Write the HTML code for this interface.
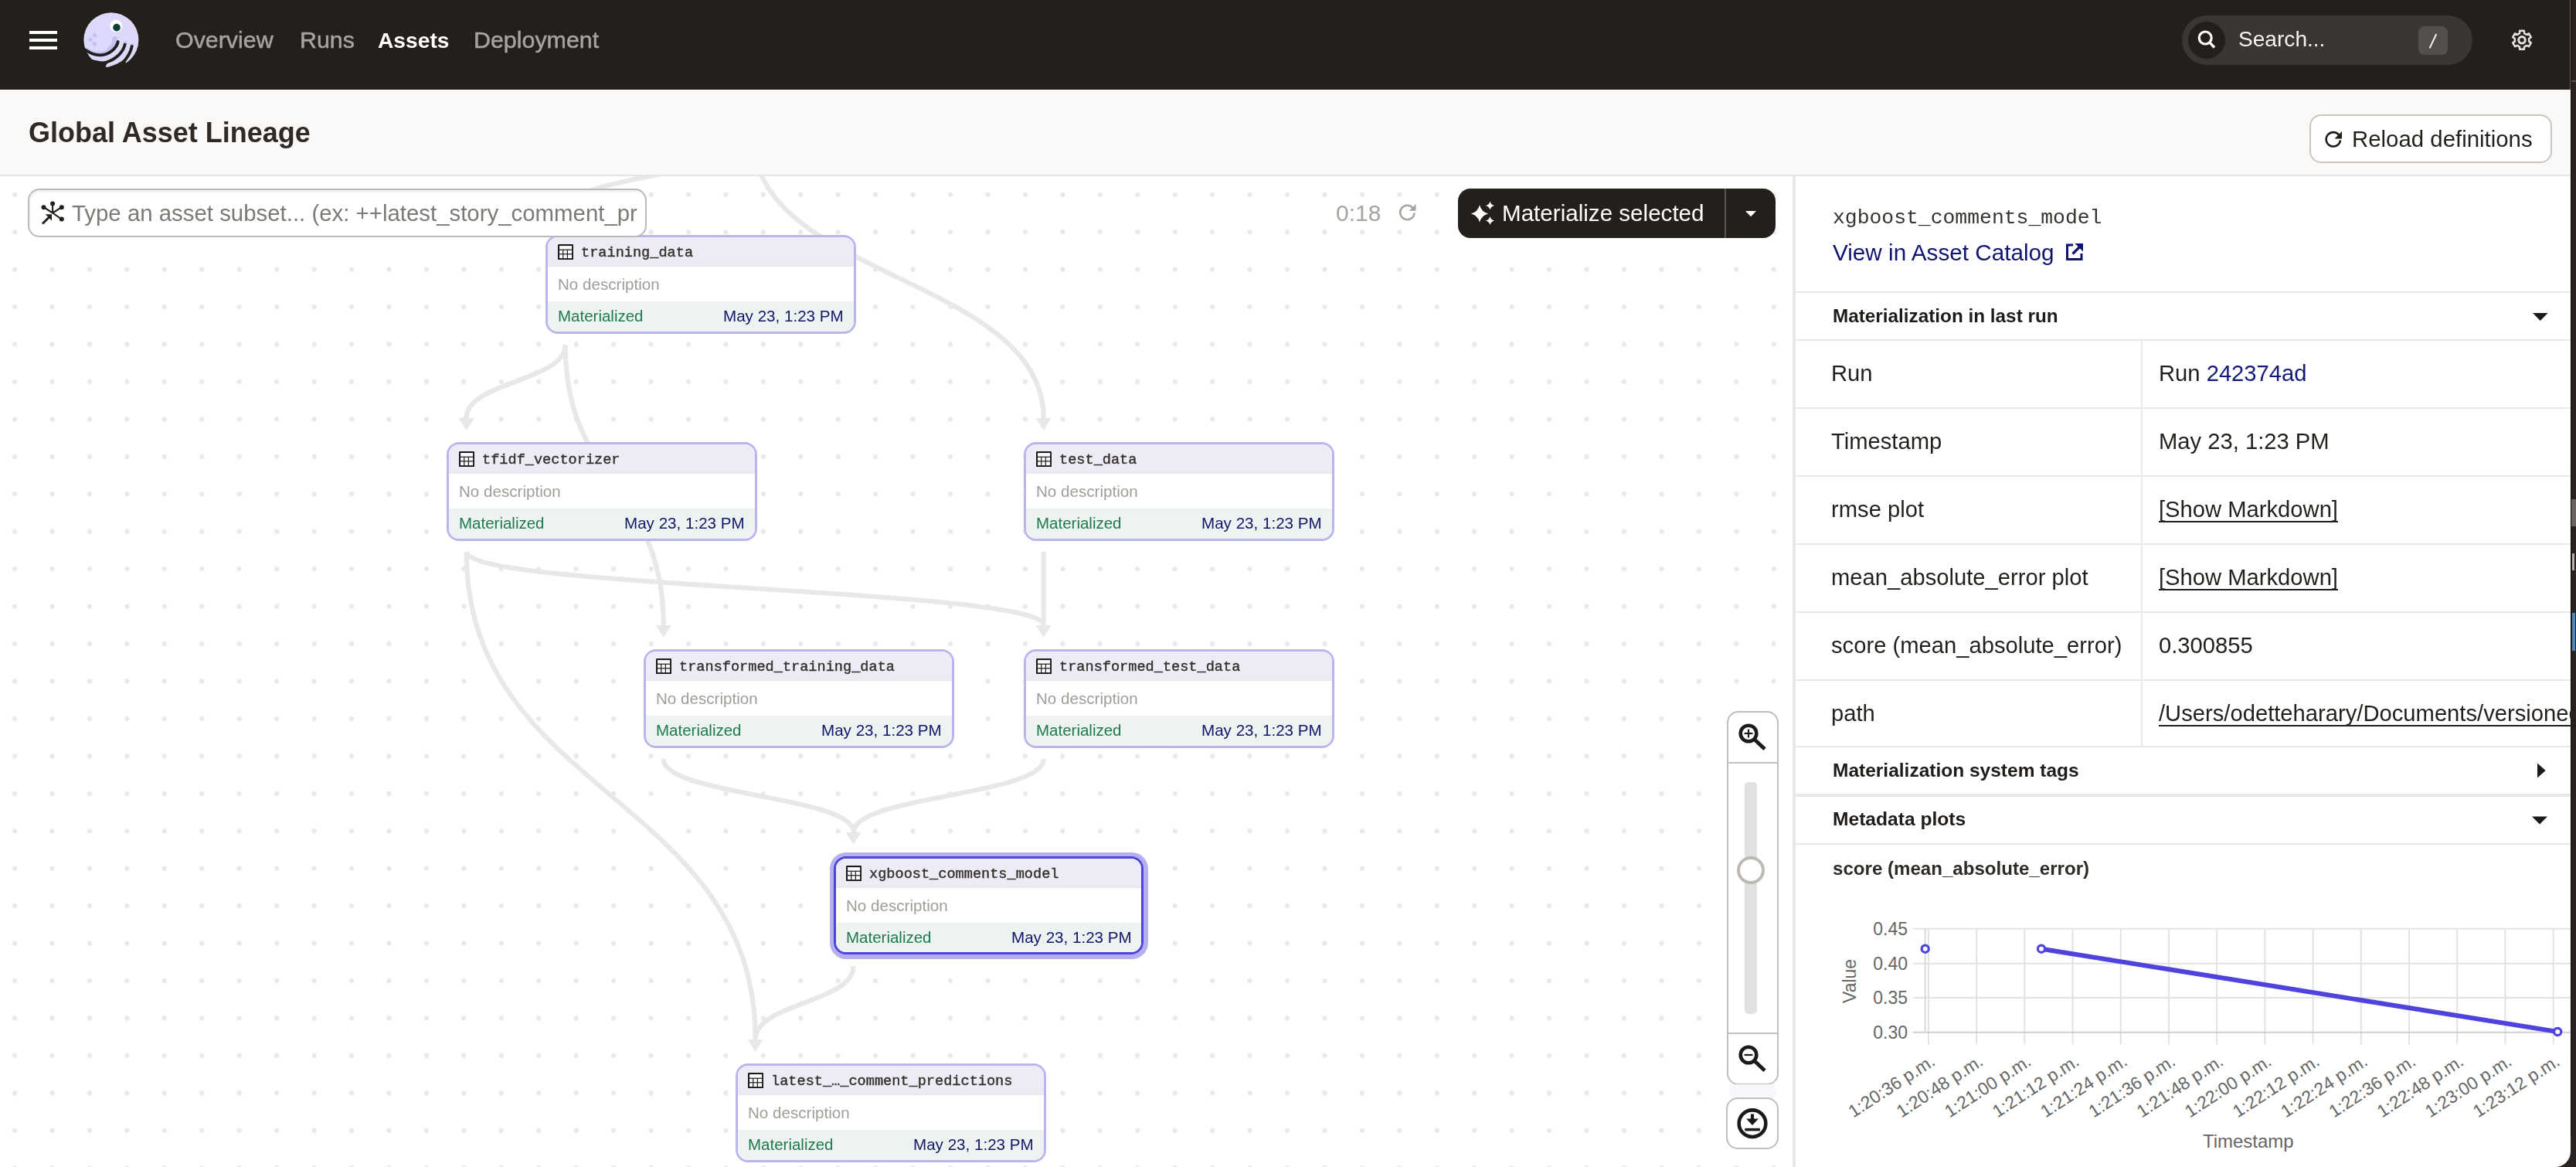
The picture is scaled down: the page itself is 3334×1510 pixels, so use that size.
<!DOCTYPE html><html><head><meta charset="utf-8"><style>
html,body{margin:0;padding:0;}
body{width:3334px;height:1510px;position:relative;overflow:hidden;background:#fff;font-family:'Liberation Sans', sans-serif;}
.t{position:absolute;white-space:nowrap;will-change:transform;}
.a{position:absolute;}
</style></head><body>
<div class="a" style="left:0;top:0;width:3327px;height:116px;background:#231f1b;"></div>
<div class="a" style="left:38px;top:40px;width:36px;height:4px;background:#fff;"></div>
<div class="a" style="left:38px;top:50px;width:36px;height:4px;background:#fff;"></div>
<div class="a" style="left:38px;top:60px;width:36px;height:4px;background:#fff;"></div>
<svg class="a" style="left:100px;top:10px" width="90" height="85" viewBox="0 0 90 85">
<circle cx="43.9" cy="41.7" r="35.5" fill="#dcd9fb"/>
<path d="M49.5,41.5 C49,50 42,57.5 30,58.5 C22,59 17,57 13.5,54" stroke="#c6c1f4" stroke-width="3.2" fill="none" stroke-linecap="round"/>
<path d="M49,40.5 C48.5,47 46,51 42,54" stroke="#c6c1f4" stroke-width="7" fill="none" stroke-linecap="round"/>
<path d="M52.7,44 C51,52 42,61 30,61.3 C22,61.3 17,59 8,53" stroke="#231f1b" stroke-width="3.8" fill="none" stroke-linecap="round"/>
<path d="M61.8,46.9 C60,56 52,66 38,70.5 C33,72 28,72.5 20,73.5" stroke="#231f1b" stroke-width="3.8" fill="none" stroke-linecap="round"/>
<path d="M70.8,49.4 C69.5,57 66,64 58,72 L54,76" stroke="#231f1b" stroke-width="3.8" fill="none" stroke-linecap="round"/>
<path d="M8,56 L13,62" stroke="#231f1b" stroke-width="4" fill="none"/>
<path d="M13,64.5 C18,67 26,69 33,69.5 L40,69 L34,82 L4,82 L4,64 Z" fill="#231f1b"/>
<path d="M36,77.3 C42,76.5 50,74 56,70 L60,67.5 L63,69 L60,86 L30,86 Z" fill="#231f1b"/>
<circle cx="22.5" cy="35.6" r="2.7" fill="#c6c1f4"/>
<circle cx="16.9" cy="41.2" r="2.7" fill="#c6c1f4"/>
<circle cx="22.3" cy="46.8" r="2.7" fill="#c6c1f4"/>
<circle cx="62.5" cy="44.5" r="1.8" fill="#c6c1f4"/>
<circle cx="71.5" cy="47" r="1.6" fill="#c6c1f4"/>
<circle cx="50.3" cy="23.6" r="8" fill="#fff"/>
<circle cx="51" cy="25.6" r="4.8" fill="#0f3d37"/>
</svg>
<div class="t" style="left:227.00px;top:36.27px;font-size:30.4px;line-height:30.4px;color:#a7a39e;font-weight:400;font-family:'Liberation Sans', sans-serif;-webkit-text-stroke:0.5px #a7a39e;">Overview</div>
<div class="t" style="left:387.50px;top:36.27px;font-size:30.4px;line-height:30.4px;color:#a7a39e;font-weight:400;font-family:'Liberation Sans', sans-serif;-webkit-text-stroke:0.5px #a7a39e;">Runs</div>
<div class="t" style="left:489.00px;top:38.13px;font-size:28.2px;line-height:28.2px;color:#ffffff;font-weight:700;font-family:'Liberation Sans', sans-serif;">Assets</div>
<div class="t" style="left:612.50px;top:36.27px;font-size:30.4px;line-height:30.4px;color:#a7a39e;font-weight:400;font-family:'Liberation Sans', sans-serif;-webkit-text-stroke:0.5px #a7a39e;">Deployment</div>
<div class="a" style="left:2824px;top:20px;width:376px;height:64px;border-radius:32px;background:#3a3632;"></div>
<div class="a" style="left:2832px;top:28px;width:48px;height:48px;border-radius:24px;background:#231f1b;"></div>
<svg class="a" style="left:2840px;top:36px" width="32" height="32" viewBox="0 0 32 32">
<circle cx="14.2" cy="13" r="8" stroke="#fff" stroke-width="3.2" fill="none"/>
<line x1="19.8" y1="18.8" x2="26" y2="25.5" stroke="#fff" stroke-width="3.4"/>
</svg>
<div class="t" style="left:2897.00px;top:37.11px;font-size:28.1px;line-height:28.1px;color:#f5f4f2;font-weight:400;font-family:'Liberation Sans', sans-serif;">Search...</div>
<div class="a" style="left:3130px;top:34px;width:38px;height:37px;border-radius:8px;background:#53504c;"></div>
<svg class="a" style="left:3130px;top:34px" width="38" height="37"><line x1="14.6" y1="28.4" x2="23.2" y2="10" stroke="#f2f2f2" stroke-width="2"/></svg>
<svg class="a" style="left:3244px;top:32px" width="40" height="40" viewBox="0 0 40 40">
<path d="M23.03,11.01 L22.77,7.82 L17.23,7.82 L16.97,11.01 L13.90,12.78 L11.00,11.41 L8.24,16.20 L10.87,18.03 L10.87,21.57 L8.24,23.40 L11.00,28.19 L13.90,26.82 L16.97,28.59 L17.23,31.78 L22.77,31.78 L23.03,28.59 L26.10,26.82 L29.00,28.19 L31.76,23.40 L29.13,21.57 L29.13,18.03 L31.76,16.20 L29.00,11.41 L26.10,12.78 Z" stroke="#e2e1df" stroke-width="2.6" fill="none" stroke-linejoin="round"/>
<circle cx="20" cy="19.8" r="4.3" stroke="#e2e1df" stroke-width="3" fill="none"/>
</svg>
<div class="a" style="left:3326px;top:0;width:1px;height:116px;background:#6e6a66;"></div>
<div class="a" style="left:3327px;top:0;width:1px;height:1510px;background:#0a0a0a;"></div>
<div class="a" style="left:3328px;top:0;width:6px;height:1510px;background:#2b2120;"></div>
<div class="a" style="left:3328px;top:104px;width:6px;height:2px;background:#5a5050;"></div>
<div class="a" style="left:3328px;top:646px;width:6px;height:35px;background:#6b6360;"></div>
<div class="a" style="left:3329px;top:716px;width:3px;height:22px;background:#b5b0ab;"></div>
<div class="a" style="left:3329px;top:793px;width:4px;height:49px;background:#4a8ac0;"></div>
<div class="a" style="left:0;top:116px;width:3327px;height:110px;background:#faf9f7;"></div>
<div class="a" style="left:0;top:226px;width:3327px;height:2px;background:#e5e5e6;"></div>
<div class="t" style="left:36.50px;top:154.33px;font-size:36.0px;line-height:36.0px;color:#2e2a26;font-weight:700;font-family:'Liberation Sans', sans-serif;">Global Asset Lineage</div>
<div class="a" style="left:2988.5px;top:148.2px;width:310.5px;height:59px;border:2px solid #c9c5c0;border-radius:15px;background:#fff;"></div>
<svg class="a" style="left:3004px;top:165px" width="32" height="32" viewBox="0 0 32 32">
<path d="M23.4,10 A9.2,9.2 0 1 0 25,16.5" stroke="#1e1b18" stroke-width="2.6" fill="none"/>
<path d="M27,5 L27,14.5 L17.5,14.5 Z" fill="#231f1b"/>
</svg>
<div class="t" style="left:3044.00px;top:165.41px;font-size:29.4px;line-height:29.4px;color:#231f1b;font-weight:400;font-family:'Liberation Sans', sans-serif;">Reload definitions</div>
<svg class="a" style="left:0;top:228px" width="2320" height="1282" viewBox="0 228 2320 1282">
<defs><pattern id="dots" patternUnits="userSpaceOnUse" x="-5.170" y="227.580" width="48.44" height="48.44"><circle cx="24.22" cy="24.22" r="3.1" fill="#e9e9e9"/></pattern></defs>
<rect x="0" y="228" width="2320" height="1282" fill="url(#dots)"/>
<path d="M975.00,178.00 C975.00,225.50 731.70,225.50 731.70,273.00" stroke="#e8e8e8" stroke-width="6.2" fill="none"/>
<path d="M975.00,178.00 C975.00,359.50 1350.70,359.50 1350.70,541.00" stroke="#e8e8e8" stroke-width="6.2" fill="none"/>
<path d="M731.70,446.00 C731.70,493.50 603.70,493.50 603.70,541.00" stroke="#e8e8e8" stroke-width="6.2" fill="none"/>
<path d="M731.70,446.00 C731.70,627.50 858.70,627.50 858.70,809.00" stroke="#e8e8e8" stroke-width="6.2" fill="none"/>
<path d="M603.70,714.00 C603.70,761.50 1350.70,761.50 1350.70,809.00" stroke="#e8e8e8" stroke-width="6.2" fill="none"/>
<path d="M603.70,714.00 C603.70,1029.50 977.70,1029.50 977.70,1345.00" stroke="#e8e8e8" stroke-width="6.2" fill="none"/>
<path d="M1350.70,714.00 C1350.70,761.50 1350.70,761.50 1350.70,809.00" stroke="#e8e8e8" stroke-width="6.2" fill="none"/>
<path d="M858.70,982.00 C858.70,1029.50 1104.70,1029.50 1104.70,1077.00" stroke="#e8e8e8" stroke-width="6.2" fill="none"/>
<path d="M1350.70,982.00 C1350.70,1029.50 1104.70,1029.50 1104.70,1077.00" stroke="#e8e8e8" stroke-width="6.2" fill="none"/>
<path d="M1104.70,1250.00 C1104.70,1297.50 977.70,1297.50 977.70,1345.00" stroke="#e8e8e8" stroke-width="6.2" fill="none"/>
<path d="M721.70,273.00 L741.70,273.00 L731.70,289.00 Z" fill="#e8e8e8"/>
<path d="M848.70,809.00 L868.70,809.00 L858.70,825.00 Z" fill="#e8e8e8"/>
<path d="M1340.70,809.00 L1360.70,809.00 L1350.70,825.00 Z" fill="#e8e8e8"/>
<path d="M967.70,1345.00 L987.70,1345.00 L977.70,1361.00 Z" fill="#e8e8e8"/>
<path d="M1094.70,1077.00 L1114.70,1077.00 L1104.70,1093.00 Z" fill="#e8e8e8"/>
<path d="M593.70,541.00 L613.70,541.00 L603.70,557.00 Z" fill="#e8e8e8"/>
<path d="M1340.70,541.00 L1360.70,541.00 L1350.70,557.00 Z" fill="#e8e8e8"/>
</svg>
<div class="a" style="left:706px;top:304px;width:396px;height:122px;border:3px solid #bbb5ee;border-radius:16px;background:#fff;overflow:hidden;"><div class="a" style="left:0;top:0;right:0;height:36px;background:#ecebf6;"></div><div class="a" style="left:0;top:36px;right:0;height:2px;background:#e9e8ef;"></div><div class="a" style="left:0;top:83px;right:0;bottom:0;background:#edf3f0;"></div></div>
<svg class="a" style="left:722px;top:316.3px" width="20.2" height="20.2" viewBox="0 0 20.4 20.4">
<rect x="0" y="0" width="20.4" height="20.4" rx="1.3" fill="#1b1a19"/>
<rect x="2.1" y="2.1" width="16.2" height="4.6" fill="#fbfbfe"/>
<rect x="2.1" y="7.9" width="4.1" height="4.4" fill="#fbfbfe"/><rect x="7.4" y="7.9" width="4.5" height="4.4" fill="#fbfbfe"/><rect x="13.1" y="7.9" width="5.2" height="4.4" fill="#fbfbfe"/>
<rect x="2.1" y="13.5" width="4.1" height="4.8" fill="#fbfbfe"/><rect x="7.4" y="13.5" width="4.5" height="4.8" fill="#fbfbfe"/><rect x="13.1" y="13.5" width="5.2" height="4.8" fill="#fbfbfe"/>
</svg>
<div class="t" style="left:751.50px;top:319.15px;font-size:18.6px;line-height:18.6px;color:#35302b;font-weight:400;font-family:'Liberation Mono', monospace;-webkit-text-stroke:0.4px #35302b;">training_data</div>
<div class="t" style="left:722.00px;top:357.56px;font-size:20.6px;line-height:20.6px;color:#a19d98;font-weight:400;font-family:'Liberation Sans', sans-serif;">No description</div>
<div class="t" style="left:722.00px;top:399.15px;font-size:20.5px;line-height:20.5px;color:#1d7a4c;font-weight:400;font-family:'Liberation Sans', sans-serif;">Materialized</div>
<div class="t" style="right:2242.50px;top:399.06px;font-size:20.6px;line-height:20.6px;color:#12166b;font-weight:400;font-family:'Liberation Sans', sans-serif;">May 23, 1:23 PM</div>
<div class="a" style="left:578px;top:572px;width:396px;height:122px;border:3px solid #bbb5ee;border-radius:16px;background:#fff;overflow:hidden;"><div class="a" style="left:0;top:0;right:0;height:36px;background:#ecebf6;"></div><div class="a" style="left:0;top:36px;right:0;height:2px;background:#e9e8ef;"></div><div class="a" style="left:0;top:83px;right:0;bottom:0;background:#edf3f0;"></div></div>
<svg class="a" style="left:594px;top:584.3px" width="20.2" height="20.2" viewBox="0 0 20.4 20.4">
<rect x="0" y="0" width="20.4" height="20.4" rx="1.3" fill="#1b1a19"/>
<rect x="2.1" y="2.1" width="16.2" height="4.6" fill="#fbfbfe"/>
<rect x="2.1" y="7.9" width="4.1" height="4.4" fill="#fbfbfe"/><rect x="7.4" y="7.9" width="4.5" height="4.4" fill="#fbfbfe"/><rect x="13.1" y="7.9" width="5.2" height="4.4" fill="#fbfbfe"/>
<rect x="2.1" y="13.5" width="4.1" height="4.8" fill="#fbfbfe"/><rect x="7.4" y="13.5" width="4.5" height="4.8" fill="#fbfbfe"/><rect x="13.1" y="13.5" width="5.2" height="4.8" fill="#fbfbfe"/>
</svg>
<div class="t" style="left:623.50px;top:587.15px;font-size:18.6px;line-height:18.6px;color:#35302b;font-weight:400;font-family:'Liberation Mono', monospace;-webkit-text-stroke:0.4px #35302b;">tfidf_vectorizer</div>
<div class="t" style="left:594.00px;top:625.56px;font-size:20.6px;line-height:20.6px;color:#a19d98;font-weight:400;font-family:'Liberation Sans', sans-serif;">No description</div>
<div class="t" style="left:594.00px;top:667.15px;font-size:20.5px;line-height:20.5px;color:#1d7a4c;font-weight:400;font-family:'Liberation Sans', sans-serif;">Materialized</div>
<div class="t" style="right:2370.50px;top:667.06px;font-size:20.6px;line-height:20.6px;color:#12166b;font-weight:400;font-family:'Liberation Sans', sans-serif;">May 23, 1:23 PM</div>
<div class="a" style="left:1325px;top:572px;width:396px;height:122px;border:3px solid #bbb5ee;border-radius:16px;background:#fff;overflow:hidden;"><div class="a" style="left:0;top:0;right:0;height:36px;background:#ecebf6;"></div><div class="a" style="left:0;top:36px;right:0;height:2px;background:#e9e8ef;"></div><div class="a" style="left:0;top:83px;right:0;bottom:0;background:#edf3f0;"></div></div>
<svg class="a" style="left:1341px;top:584.3px" width="20.2" height="20.2" viewBox="0 0 20.4 20.4">
<rect x="0" y="0" width="20.4" height="20.4" rx="1.3" fill="#1b1a19"/>
<rect x="2.1" y="2.1" width="16.2" height="4.6" fill="#fbfbfe"/>
<rect x="2.1" y="7.9" width="4.1" height="4.4" fill="#fbfbfe"/><rect x="7.4" y="7.9" width="4.5" height="4.4" fill="#fbfbfe"/><rect x="13.1" y="7.9" width="5.2" height="4.4" fill="#fbfbfe"/>
<rect x="2.1" y="13.5" width="4.1" height="4.8" fill="#fbfbfe"/><rect x="7.4" y="13.5" width="4.5" height="4.8" fill="#fbfbfe"/><rect x="13.1" y="13.5" width="5.2" height="4.8" fill="#fbfbfe"/>
</svg>
<div class="t" style="left:1370.50px;top:587.15px;font-size:18.6px;line-height:18.6px;color:#35302b;font-weight:400;font-family:'Liberation Mono', monospace;-webkit-text-stroke:0.4px #35302b;">test_data</div>
<div class="t" style="left:1341.00px;top:625.56px;font-size:20.6px;line-height:20.6px;color:#a19d98;font-weight:400;font-family:'Liberation Sans', sans-serif;">No description</div>
<div class="t" style="left:1341.00px;top:667.15px;font-size:20.5px;line-height:20.5px;color:#1d7a4c;font-weight:400;font-family:'Liberation Sans', sans-serif;">Materialized</div>
<div class="t" style="right:1623.50px;top:667.06px;font-size:20.6px;line-height:20.6px;color:#12166b;font-weight:400;font-family:'Liberation Sans', sans-serif;">May 23, 1:23 PM</div>
<div class="a" style="left:833px;top:840px;width:396px;height:122px;border:3px solid #bbb5ee;border-radius:16px;background:#fff;overflow:hidden;"><div class="a" style="left:0;top:0;right:0;height:36px;background:#ecebf6;"></div><div class="a" style="left:0;top:36px;right:0;height:2px;background:#e9e8ef;"></div><div class="a" style="left:0;top:83px;right:0;bottom:0;background:#edf3f0;"></div></div>
<svg class="a" style="left:849px;top:852.3px" width="20.2" height="20.2" viewBox="0 0 20.4 20.4">
<rect x="0" y="0" width="20.4" height="20.4" rx="1.3" fill="#1b1a19"/>
<rect x="2.1" y="2.1" width="16.2" height="4.6" fill="#fbfbfe"/>
<rect x="2.1" y="7.9" width="4.1" height="4.4" fill="#fbfbfe"/><rect x="7.4" y="7.9" width="4.5" height="4.4" fill="#fbfbfe"/><rect x="13.1" y="7.9" width="5.2" height="4.4" fill="#fbfbfe"/>
<rect x="2.1" y="13.5" width="4.1" height="4.8" fill="#fbfbfe"/><rect x="7.4" y="13.5" width="4.5" height="4.8" fill="#fbfbfe"/><rect x="13.1" y="13.5" width="5.2" height="4.8" fill="#fbfbfe"/>
</svg>
<div class="t" style="left:878.50px;top:855.15px;font-size:18.6px;line-height:18.6px;color:#35302b;font-weight:400;font-family:'Liberation Mono', monospace;-webkit-text-stroke:0.4px #35302b;">transformed_training_data</div>
<div class="t" style="left:849.00px;top:893.56px;font-size:20.6px;line-height:20.6px;color:#a19d98;font-weight:400;font-family:'Liberation Sans', sans-serif;">No description</div>
<div class="t" style="left:849.00px;top:935.15px;font-size:20.5px;line-height:20.5px;color:#1d7a4c;font-weight:400;font-family:'Liberation Sans', sans-serif;">Materialized</div>
<div class="t" style="right:2115.50px;top:935.06px;font-size:20.6px;line-height:20.6px;color:#12166b;font-weight:400;font-family:'Liberation Sans', sans-serif;">May 23, 1:23 PM</div>
<div class="a" style="left:1325px;top:840px;width:396px;height:122px;border:3px solid #bbb5ee;border-radius:16px;background:#fff;overflow:hidden;"><div class="a" style="left:0;top:0;right:0;height:36px;background:#ecebf6;"></div><div class="a" style="left:0;top:36px;right:0;height:2px;background:#e9e8ef;"></div><div class="a" style="left:0;top:83px;right:0;bottom:0;background:#edf3f0;"></div></div>
<svg class="a" style="left:1341px;top:852.3px" width="20.2" height="20.2" viewBox="0 0 20.4 20.4">
<rect x="0" y="0" width="20.4" height="20.4" rx="1.3" fill="#1b1a19"/>
<rect x="2.1" y="2.1" width="16.2" height="4.6" fill="#fbfbfe"/>
<rect x="2.1" y="7.9" width="4.1" height="4.4" fill="#fbfbfe"/><rect x="7.4" y="7.9" width="4.5" height="4.4" fill="#fbfbfe"/><rect x="13.1" y="7.9" width="5.2" height="4.4" fill="#fbfbfe"/>
<rect x="2.1" y="13.5" width="4.1" height="4.8" fill="#fbfbfe"/><rect x="7.4" y="13.5" width="4.5" height="4.8" fill="#fbfbfe"/><rect x="13.1" y="13.5" width="5.2" height="4.8" fill="#fbfbfe"/>
</svg>
<div class="t" style="left:1370.50px;top:855.15px;font-size:18.6px;line-height:18.6px;color:#35302b;font-weight:400;font-family:'Liberation Mono', monospace;-webkit-text-stroke:0.4px #35302b;">transformed_test_data</div>
<div class="t" style="left:1341.00px;top:893.56px;font-size:20.6px;line-height:20.6px;color:#a19d98;font-weight:400;font-family:'Liberation Sans', sans-serif;">No description</div>
<div class="t" style="left:1341.00px;top:935.15px;font-size:20.5px;line-height:20.5px;color:#1d7a4c;font-weight:400;font-family:'Liberation Sans', sans-serif;">Materialized</div>
<div class="t" style="right:1623.50px;top:935.06px;font-size:20.6px;line-height:20.6px;color:#12166b;font-weight:400;font-family:'Liberation Sans', sans-serif;">May 23, 1:23 PM</div>
<div class="a" style="left:1074px;top:1103px;width:412px;height:138px;border-radius:21px;background:#b6b0ee;"></div>
<div class="a" style="left:1079px;top:1108px;width:395.0px;height:121.0px;border:3.5px solid #4f43dd;border-radius:16px;background:#fff;overflow:hidden;"><div class="a" style="left:0;top:0;right:0;height:35.5px;background:#ecebf6;"></div><div class="a" style="left:0;top:35.5px;right:0;height:2px;background:#e9e8ef;"></div><div class="a" style="left:0;top:82.5px;right:0;bottom:0;background:#edf3f0;"></div></div>
<svg class="a" style="left:1095px;top:1120.3px" width="20.2" height="20.2" viewBox="0 0 20.4 20.4">
<rect x="0" y="0" width="20.4" height="20.4" rx="1.3" fill="#1b1a19"/>
<rect x="2.1" y="2.1" width="16.2" height="4.6" fill="#fbfbfe"/>
<rect x="2.1" y="7.9" width="4.1" height="4.4" fill="#fbfbfe"/><rect x="7.4" y="7.9" width="4.5" height="4.4" fill="#fbfbfe"/><rect x="13.1" y="7.9" width="5.2" height="4.4" fill="#fbfbfe"/>
<rect x="2.1" y="13.5" width="4.1" height="4.8" fill="#fbfbfe"/><rect x="7.4" y="13.5" width="4.5" height="4.8" fill="#fbfbfe"/><rect x="13.1" y="13.5" width="5.2" height="4.8" fill="#fbfbfe"/>
</svg>
<div class="t" style="left:1124.50px;top:1123.15px;font-size:18.6px;line-height:18.6px;color:#35302b;font-weight:400;font-family:'Liberation Mono', monospace;-webkit-text-stroke:0.4px #35302b;">xgboost_comments_model</div>
<div class="t" style="left:1095.00px;top:1161.56px;font-size:20.6px;line-height:20.6px;color:#a19d98;font-weight:400;font-family:'Liberation Sans', sans-serif;">No description</div>
<div class="t" style="left:1095.00px;top:1203.15px;font-size:20.5px;line-height:20.5px;color:#1d7a4c;font-weight:400;font-family:'Liberation Sans', sans-serif;">Materialized</div>
<div class="t" style="right:1869.50px;top:1203.06px;font-size:20.6px;line-height:20.6px;color:#12166b;font-weight:400;font-family:'Liberation Sans', sans-serif;">May 23, 1:23 PM</div>
<div class="a" style="left:952px;top:1376px;width:396px;height:122px;border:3px solid #bbb5ee;border-radius:16px;background:#fff;overflow:hidden;"><div class="a" style="left:0;top:0;right:0;height:36px;background:#ecebf6;"></div><div class="a" style="left:0;top:36px;right:0;height:2px;background:#e9e8ef;"></div><div class="a" style="left:0;top:83px;right:0;bottom:0;background:#edf3f0;"></div></div>
<svg class="a" style="left:968px;top:1388.3px" width="20.2" height="20.2" viewBox="0 0 20.4 20.4">
<rect x="0" y="0" width="20.4" height="20.4" rx="1.3" fill="#1b1a19"/>
<rect x="2.1" y="2.1" width="16.2" height="4.6" fill="#fbfbfe"/>
<rect x="2.1" y="7.9" width="4.1" height="4.4" fill="#fbfbfe"/><rect x="7.4" y="7.9" width="4.5" height="4.4" fill="#fbfbfe"/><rect x="13.1" y="7.9" width="5.2" height="4.4" fill="#fbfbfe"/>
<rect x="2.1" y="13.5" width="4.1" height="4.8" fill="#fbfbfe"/><rect x="7.4" y="13.5" width="4.5" height="4.8" fill="#fbfbfe"/><rect x="13.1" y="13.5" width="5.2" height="4.8" fill="#fbfbfe"/>
</svg>
<div class="t" style="left:997.50px;top:1391.15px;font-size:18.6px;line-height:18.6px;color:#35302b;font-weight:400;font-family:'Liberation Mono', monospace;-webkit-text-stroke:0.4px #35302b;">latest_&hellip;_comment_predictions</div>
<div class="t" style="left:968.00px;top:1429.56px;font-size:20.6px;line-height:20.6px;color:#a19d98;font-weight:400;font-family:'Liberation Sans', sans-serif;">No description</div>
<div class="t" style="left:968.00px;top:1471.15px;font-size:20.5px;line-height:20.5px;color:#1d7a4c;font-weight:400;font-family:'Liberation Sans', sans-serif;">Materialized</div>
<div class="t" style="right:1996.50px;top:1471.06px;font-size:20.6px;line-height:20.6px;color:#12166b;font-weight:400;font-family:'Liberation Sans', sans-serif;">May 23, 1:23 PM</div>
<div class="a" style="left:36.3px;top:244.3px;width:796.7px;height:58.9px;border:2px solid #bdb9b4;border-radius:15px;background:#fff;box-shadow:inset 1px 2px 3px rgba(0,0,0,0.08);overflow:hidden;"></div>
<svg class="a" style="left:50px;top:258px" width="36" height="36" viewBox="0 0 36 36">
<g stroke="#231f1b" stroke-width="2.1" fill="none">
<line x1="18.1" y1="17.5" x2="6.5" y2="10.2"/><line x1="18.1" y1="17.5" x2="18.1" y2="5.4"/><line x1="18.1" y1="17.5" x2="29.8" y2="10.2"/><line x1="18.1" y1="17.5" x2="29.8" y2="25.6"/>
</g>
<circle cx="6.5" cy="10.2" r="3" fill="#231f1b"/><circle cx="18.1" cy="5.4" r="3" fill="#231f1b"/><circle cx="29.8" cy="10.2" r="3" fill="#231f1b"/><circle cx="29.8" cy="25.6" r="3" fill="#231f1b"/>
<line x1="5" y1="31.5" x2="14" y2="22.5" stroke="#231f1b" stroke-width="3"/>
<path d="M8.8,19.2 L17,19.2 L17,27.4 Z" fill="#231f1b"/>
</svg>
<div class="a" style="left:38px;top:246px;width:787px;height:58px;overflow:hidden;">
<div class="t" style="left:54.8px;top:15.01px;font-size:29.4px;line-height:29.4px;color:#7d7a76;">Type an asset subset... (ex: ++latest_story_comment_prediction</div>
</div>
<div class="t" style="left:1729.00px;top:260.50px;font-size:30.0px;line-height:30.0px;color:#a8a49f;font-weight:400;font-family:'Liberation Sans', sans-serif;">0:18</div>
<svg class="a" style="left:1806px;top:258px" width="32" height="32" viewBox="0 0 32 32">
<path d="M22.6,11.2 A9.2,9.2 0 1 0 24.6,17.5" stroke="#a8a49f" stroke-width="2.6" fill="none"/>
<path d="M26.5,6 L26.5,14.8 L17.7,14.8 Z" fill="#a8a49f"/>
</svg>
<div class="a" style="left:1887px;top:244px;width:411px;height:64px;border-radius:16px;background:#231f1b;"></div>
<div class="a" style="left:2232px;top:244px;width:2px;height:64px;background:#5a5550;"></div>
<svg class="a" style="left:1895px;top:256px" width="50" height="40" viewBox="1895 256 50 40">
<path d="M1926.20,276.50 Q1917.24,278.74 1915.00,287.70 Q1912.76,278.74 1903.80,276.50 Q1912.76,274.26 1915.00,265.30 Q1917.24,274.26 1926.20,276.50 Z" fill="#fff"/>
<path d="M1934.10,266.00 Q1929.62,267.12 1928.50,271.60 Q1927.38,267.12 1922.90,266.00 Q1927.38,264.88 1928.50,260.40 Q1929.62,264.88 1934.10,266.00 Z" fill="#fff"/>
<path d="M1934.10,285.50 Q1929.62,286.62 1928.50,291.10 Q1927.38,286.62 1922.90,285.50 Q1927.38,284.38 1928.50,279.90 Q1929.62,284.38 1934.10,285.50 Z" fill="#fff"/>
</svg>
<div class="t" style="left:1944.00px;top:260.94px;font-size:29.6px;line-height:29.6px;color:#ffffff;font-weight:400;font-family:'Liberation Sans', sans-serif;">Materialize selected</div>
<svg class="a" style="left:2255px;top:268px" width="22" height="16"><path d="M4,5 L18,5 L11,12.3 Z" fill="#fff"/></svg>
<div class="a" style="left:2234.5px;top:920px;width:63px;height:479.5px;border:2px solid #c2beb9;border-radius:15px;background:#fff;"></div>
<div class="a" style="left:2236.5px;top:985.5px;width:63px;height:2px;background:#c2beb9;"></div>
<div class="a" style="left:2236.5px;top:1336px;width:63px;height:2px;background:#c2beb9;"></div>
<div class="a" style="left:2258px;top:1012px;width:16px;height:300px;border-radius:5px;background:#e1e1e1;"></div>
<div class="a" style="left:2247.8px;top:1107.8px;width:28px;height:28px;border:4px solid #bdb9b4;border-radius:50%;background:#fff;"></div>
<svg class="a" style="left:2242.8px;top:928.8px" width="44" height="44" viewBox="2242.8 928.8 44 44"><circle cx="2262.8" cy="948.8" r="10.3" stroke="#1a1a1a" stroke-width="4.6" fill="none"/><line x1="2270.3" y1="956.3" x2="2283.8" y2="969.0999999999999" stroke="#1a1a1a" stroke-width="4.8"/><line x1="2257.4" y1="948.8" x2="2268.2000000000003" y2="948.8" stroke="#1a1a1a" stroke-width="2.2"/><line x1="2262.8" y1="943.4" x2="2262.8" y2="954.1999999999999" stroke="#1a1a1a" stroke-width="2.2"/></svg>
<svg class="a" style="left:2242.8px;top:1344.6px" width="44" height="44" viewBox="2242.8 1344.6 44 44"><circle cx="2262.8" cy="1364.6" r="10.3" stroke="#1a1a1a" stroke-width="4.6" fill="none"/><line x1="2270.3" y1="1372.1" x2="2283.8" y2="1384.8999999999999" stroke="#1a1a1a" stroke-width="4.8"/><line x1="2257.4" y1="1364.6" x2="2268.2000000000003" y2="1364.6" stroke="#1a1a1a" stroke-width="2.2"/></svg>
<div class="a" style="left:2238px;top:1403px;width:60px;height:17px;background:#f7f8fc;"></div>
<div class="a" style="left:2234.4px;top:1420.4px;width:63.4px;height:62.9px;border:2px solid #c2beb9;border-radius:15px;background:#fff;"></div>
<svg class="a" style="left:2244px;top:1430px" width="48" height="48" viewBox="2244 1430 48 48">
<circle cx="2268" cy="1453.7" r="17.3" stroke="#1a1a1a" stroke-width="4.6" fill="none"/>
<line x1="2268" y1="1441.5" x2="2268" y2="1450" stroke="#1a1a1a" stroke-width="4.2"/>
<path d="M2260,1447.5 L2276,1447.5 L2268,1456 Z" fill="#1a1a1a"/>
<rect x="2258.3" y="1459.8" width="19.6" height="3.6" fill="#1a1a1a"/>
</svg>
<div class="a" style="left:2320px;top:228px;width:4px;height:1282px;background:#e8e8e8;"></div>
<div class="a" style="left:3290px;top:1470px;width:44px;height:40px;background:#2b2120;"></div>
<div class="a" style="left:2324px;top:228px;width:1003px;height:1282px;background:#fff;border-bottom-right-radius:20px;"></div>
<div class="t" style="left:2371.50px;top:269.27px;font-size:26.4px;line-height:26.4px;color:#36322e;font-weight:400;font-family:'Liberation Mono', monospace;">xgboost_comments_model</div>
<div class="t" style="left:2371.50px;top:311.66px;font-size:29.7px;line-height:29.7px;color:#0f1470;font-weight:400;font-family:'Liberation Sans', sans-serif;">View in Asset Catalog</div>
<svg class="a" style="left:2672px;top:313px" width="26" height="26" viewBox="0 0 26 26">
<path d="M11,4 L3.5,4 L3.5,22.5 L22,22.5 L22,15" stroke="#0f1470" stroke-width="3" fill="none"/>
<path d="M13.5,2 L24,2 L24,12.5 Z" fill="#0f1470"/>
<line x1="10.5" y1="15.5" x2="20" y2="6" stroke="#0f1470" stroke-width="3.2"/>
</svg>
<div class="a" style="left:2324px;top:377px;width:1003px;height:2px;background:#e8e8e8;"></div>
<div class="t" style="left:2371.50px;top:396.83px;font-size:24.3px;line-height:24.3px;color:#1e1b18;font-weight:700;font-family:'Liberation Sans', sans-serif;">Materialization in last run</div>
<svg class="a" style="left:3276px;top:403px" width="24" height="14"><path d="M2,2 L21.6,2 L11.8,12 Z" fill="#1a1a1a"/></svg>
<div class="a" style="left:2324px;top:439px;width:1003px;height:2px;background:#e8e8e8;"></div>
<div class="t" style="left:2369.50px;top:468.78px;font-size:29.2px;line-height:29.2px;color:#231f1b;font-weight:400;font-family:'Liberation Sans', sans-serif;">Run</div>
<div class="t" style="left:2794.00px;top:468.78px;font-size:29.2px;line-height:29.2px;color:#231f1b;font-weight:400;font-family:'Liberation Sans', sans-serif;">Run <span style="color:#131a78">242374ad</span></div>
<div class="t" style="left:2369.50px;top:556.78px;font-size:29.2px;line-height:29.2px;color:#231f1b;font-weight:400;font-family:'Liberation Sans', sans-serif;">Timestamp</div>
<div class="t" style="left:2794.00px;top:556.78px;font-size:29.2px;line-height:29.2px;color:#231f1b;font-weight:400;font-family:'Liberation Sans', sans-serif;">May 23, 1:23 PM</div>
<div class="a" style="left:2324px;top:527px;width:1003px;height:2px;background:#e8e8e8;"></div>
<div class="t" style="left:2369.50px;top:644.78px;font-size:29.2px;line-height:29.2px;color:#231f1b;font-weight:400;font-family:'Liberation Sans', sans-serif;">rmse plot</div>
<div class="t" style="left:2794.00px;top:644.78px;font-size:29.2px;line-height:29.2px;color:#231f1b;font-weight:400;font-family:'Liberation Sans', sans-serif;"><span style="text-decoration:underline;text-decoration-skip-ink:none;text-decoration-thickness:1.6px;text-underline-offset:5px">[Show Markdown]</span></div>
<div class="a" style="left:2324px;top:615px;width:1003px;height:2px;background:#e8e8e8;"></div>
<div class="t" style="left:2369.50px;top:732.78px;font-size:29.2px;line-height:29.2px;color:#231f1b;font-weight:400;font-family:'Liberation Sans', sans-serif;">mean_absolute_error plot</div>
<div class="t" style="left:2794.00px;top:732.78px;font-size:29.2px;line-height:29.2px;color:#231f1b;font-weight:400;font-family:'Liberation Sans', sans-serif;"><span style="text-decoration:underline;text-decoration-skip-ink:none;text-decoration-thickness:1.6px;text-underline-offset:5px">[Show Markdown]</span></div>
<div class="a" style="left:2324px;top:703px;width:1003px;height:2px;background:#e8e8e8;"></div>
<div class="t" style="left:2369.50px;top:820.78px;font-size:29.2px;line-height:29.2px;color:#231f1b;font-weight:400;font-family:'Liberation Sans', sans-serif;">score (mean_absolute_error)</div>
<div class="t" style="left:2794.00px;top:820.78px;font-size:29.2px;line-height:29.2px;color:#231f1b;font-weight:400;font-family:'Liberation Sans', sans-serif;">0.300855</div>
<div class="a" style="left:2324px;top:791px;width:1003px;height:2px;background:#e8e8e8;"></div>
<div class="t" style="left:2369.50px;top:908.78px;font-size:29.2px;line-height:29.2px;color:#231f1b;font-weight:400;font-family:'Liberation Sans', sans-serif;">path</div>
<div class="t" style="left:2794.00px;top:908.78px;font-size:29.2px;line-height:29.2px;color:#231f1b;font-weight:400;font-family:'Liberation Sans', sans-serif;"><span style="text-decoration:underline;text-decoration-skip-ink:none;text-decoration-thickness:1.6px;text-underline-offset:5px">/Users/odetteharary/Documents/versioned_asset_demo</span></div>
<div class="a" style="left:2324px;top:879px;width:1003px;height:2px;background:#e8e8e8;"></div>
<div class="a" style="left:2324px;top:965px;width:1003px;height:2px;background:#e8e8e8;"></div>
<div class="a" style="left:2770.5px;top:440px;width:2px;height:526px;background:#e8e8e8;"></div>
<div class="t" style="left:2371.50px;top:985.36px;font-size:24.5px;line-height:24.5px;color:#1e1b18;font-weight:700;font-family:'Liberation Sans', sans-serif;">Materialization system tags</div>
<svg class="a" style="left:3280px;top:984px" width="18" height="26"><path d="M4,3.4 L14.6,13 L4,22.6 Z" fill="#1a1a1a"/></svg>
<div class="a" style="left:2324px;top:1027px;width:1003px;height:4px;background:#e8e8e8;"></div>
<div class="t" style="left:2371.50px;top:1048.18px;font-size:24.6px;line-height:24.6px;color:#1e1b18;font-weight:700;font-family:'Liberation Sans', sans-serif;">Metadata plots</div>
<svg class="a" style="left:3275px;top:1054px" width="24" height="14"><path d="M2,2.5 L22,2.5 L12,12.6 Z" fill="#1a1a1a"/></svg>
<div class="a" style="left:2324px;top:1090.5px;width:1003px;height:2px;background:#e8e8e8;"></div>
<div class="t" style="left:2371.50px;top:1111.90px;font-size:24.1px;line-height:24.1px;color:#2e2a26;font-weight:700;font-family:'Liberation Sans', sans-serif;">score (mean_absolute_error)</div>
<svg class="a" style="left:2324px;top:1140px" width="1003" height="370" viewBox="2324 1140 1003 370">
<line x1="2496.0" y1="1201.8" x2="2496.0" y2="1351.4" stroke="#e2e2e2" stroke-width="2"/>
<line x1="2558.2" y1="1201.8" x2="2558.2" y2="1351.4" stroke="#e2e2e2" stroke-width="2"/>
<line x1="2620.4" y1="1201.8" x2="2620.4" y2="1351.4" stroke="#e2e2e2" stroke-width="2"/>
<line x1="2682.6" y1="1201.8" x2="2682.6" y2="1351.4" stroke="#e2e2e2" stroke-width="2"/>
<line x1="2744.8" y1="1201.8" x2="2744.8" y2="1351.4" stroke="#e2e2e2" stroke-width="2"/>
<line x1="2807.0" y1="1201.8" x2="2807.0" y2="1351.4" stroke="#e2e2e2" stroke-width="2"/>
<line x1="2869.2" y1="1201.8" x2="2869.2" y2="1351.4" stroke="#e2e2e2" stroke-width="2"/>
<line x1="2931.4" y1="1201.8" x2="2931.4" y2="1351.4" stroke="#e2e2e2" stroke-width="2"/>
<line x1="2993.6" y1="1201.8" x2="2993.6" y2="1351.4" stroke="#e2e2e2" stroke-width="2"/>
<line x1="3055.8" y1="1201.8" x2="3055.8" y2="1351.4" stroke="#e2e2e2" stroke-width="2"/>
<line x1="3118.0" y1="1201.8" x2="3118.0" y2="1351.4" stroke="#e2e2e2" stroke-width="2"/>
<line x1="3180.2" y1="1201.8" x2="3180.2" y2="1351.4" stroke="#e2e2e2" stroke-width="2"/>
<line x1="3242.4" y1="1201.8" x2="3242.4" y2="1351.4" stroke="#e2e2e2" stroke-width="2"/>
<line x1="3304.6" y1="1201.8" x2="3304.6" y2="1351.4" stroke="#e2e2e2" stroke-width="2"/>
<line x1="2475.6" y1="1201.8" x2="3327" y2="1201.8" stroke="#e2e2e2" stroke-width="2"/>
<text x="2469" y="1210.0" font-size="23" fill="#666" text-anchor="end" font-family="Liberation Sans">0.45</text>
<line x1="2475.6" y1="1246.8" x2="3327" y2="1246.8" stroke="#e2e2e2" stroke-width="2"/>
<text x="2469" y="1255.0" font-size="23" fill="#666" text-anchor="end" font-family="Liberation Sans">0.40</text>
<line x1="2475.6" y1="1291" x2="3327" y2="1291" stroke="#e2e2e2" stroke-width="2"/>
<text x="2469" y="1299.2" font-size="23" fill="#666" text-anchor="end" font-family="Liberation Sans">0.35</text>
<line x1="2475.6" y1="1335.8" x2="3327" y2="1335.8" stroke="#cfcfcf" stroke-width="2"/>
<text x="2469" y="1344.0" font-size="23" fill="#666" text-anchor="end" font-family="Liberation Sans">0.30</text>
<line x1="2491.7" y1="1201.8" x2="2491.7" y2="1336" stroke="#d8d8d8" stroke-width="2"/>
<text x="0" y="0" font-size="23" fill="#666" text-anchor="middle" font-family="Liberation Sans" transform="translate(2402.2,1269.4) rotate(-90)">Value</text>
<text x="0" y="0" font-size="23" fill="#666" text-anchor="end" font-family="Liberation Sans" transform="translate(2506.0,1377) rotate(-33)">1:20:36 p.m.</text>
<text x="0" y="0" font-size="23" fill="#666" text-anchor="end" font-family="Liberation Sans" transform="translate(2568.2,1377) rotate(-33)">1:20:48 p.m.</text>
<text x="0" y="0" font-size="23" fill="#666" text-anchor="end" font-family="Liberation Sans" transform="translate(2630.4,1377) rotate(-33)">1:21:00 p.m.</text>
<text x="0" y="0" font-size="23" fill="#666" text-anchor="end" font-family="Liberation Sans" transform="translate(2692.6,1377) rotate(-33)">1:21:12 p.m.</text>
<text x="0" y="0" font-size="23" fill="#666" text-anchor="end" font-family="Liberation Sans" transform="translate(2754.8,1377) rotate(-33)">1:21:24 p.m.</text>
<text x="0" y="0" font-size="23" fill="#666" text-anchor="end" font-family="Liberation Sans" transform="translate(2817.0,1377) rotate(-33)">1:21:36 p.m.</text>
<text x="0" y="0" font-size="23" fill="#666" text-anchor="end" font-family="Liberation Sans" transform="translate(2879.2,1377) rotate(-33)">1:21:48 p.m.</text>
<text x="0" y="0" font-size="23" fill="#666" text-anchor="end" font-family="Liberation Sans" transform="translate(2941.4,1377) rotate(-33)">1:22:00 p.m.</text>
<text x="0" y="0" font-size="23" fill="#666" text-anchor="end" font-family="Liberation Sans" transform="translate(3003.6,1377) rotate(-33)">1:22:12 p.m.</text>
<text x="0" y="0" font-size="23" fill="#666" text-anchor="end" font-family="Liberation Sans" transform="translate(3065.8,1377) rotate(-33)">1:22:24 p.m.</text>
<text x="0" y="0" font-size="23" fill="#666" text-anchor="end" font-family="Liberation Sans" transform="translate(3128.0,1377) rotate(-33)">1:22:36 p.m.</text>
<text x="0" y="0" font-size="23" fill="#666" text-anchor="end" font-family="Liberation Sans" transform="translate(3190.2,1377) rotate(-33)">1:22:48 p.m.</text>
<text x="0" y="0" font-size="23" fill="#666" text-anchor="end" font-family="Liberation Sans" transform="translate(3252.4,1377) rotate(-33)">1:23:00 p.m.</text>
<text x="0" y="0" font-size="23" fill="#666" text-anchor="end" font-family="Liberation Sans" transform="translate(3314.6,1377) rotate(-33)">1:23:12 p.m.</text>
<text x="2909.8" y="1484.5" font-size="24" fill="#666" text-anchor="middle" font-family="Liberation Sans">Timestamp</text>
<line x1="2642" y1="1227.7" x2="3310.2" y2="1335" stroke="#4f43dd" stroke-width="6"/>
<circle cx="2491.7" cy="1227.7" r="4.6" fill="#fff" stroke="#4f43dd" stroke-width="3.2"/>
<circle cx="2642" cy="1227.7" r="4.6" fill="#fff" stroke="#4f43dd" stroke-width="3.2"/>
<circle cx="3310.2" cy="1335" r="4.6" fill="#fff" stroke="#4f43dd" stroke-width="3.2"/>
</svg>
<script>(function(){var w=window.innerWidth||3334;var s=w/3334;if(Math.abs(s-1)>0.005){document.documentElement.style.zoom=s;}})();</script>
</body></html>
